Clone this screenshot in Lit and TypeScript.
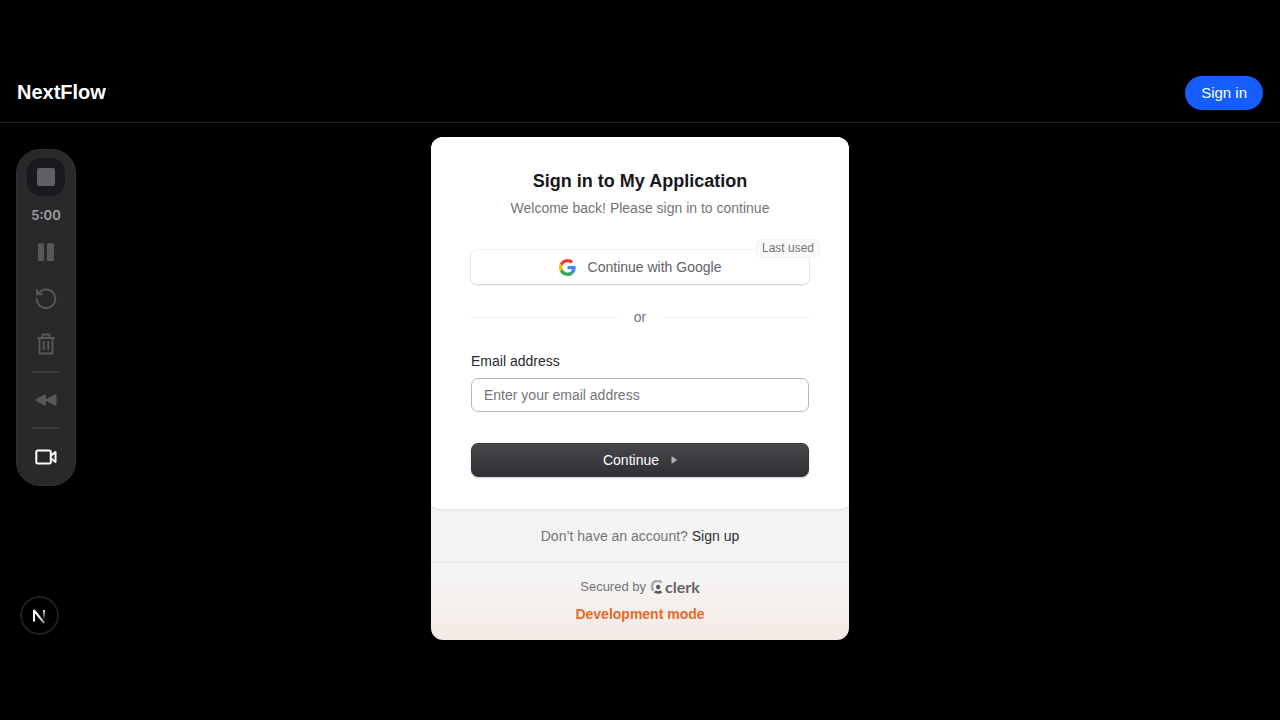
import { LitElement, html, css } from "lit";
import { customElement, state } from "lit/decorators.js";

@customElement("recorder-toolbar")
class RecorderToolbar extends LitElement {
  static styles = css`
    :host { display: block; }
    .bar {
      box-sizing: border-box; width: 60px; padding: 8px 0 13px;
      display: flex; flex-direction: column; align-items: center;
      border-radius: 24px; background: #29292c; border: 1px solid #2f2f32;
      font-family: "Inter", sans-serif;
    }
    button {
      width: 30px; height: 30px; padding: 0; border: 0; background: none;
      display: grid; place-items: center; color: #58585b;
    }
    svg { display: block; }
    .stop { width: 38px; height: 38px; border-radius: 14px; background: #1a1a1e; color: #605f62; }
    .time { margin: 9px 0 12px; font-size: 13px; line-height: 20px; font-weight: 600; color: #a0a0a3; }
    .tools { display: flex; flex-direction: column; gap: 16px; }
    .rule { width: 28px; height: 2px; margin: 12px 0; border: 0; background: #3b3b3e; }
    .rule:last-of-type { margin-bottom: 13px; }
    .camera { color: #fff; }
  `;
  render() {
    return html`
      <div class="bar" role="toolbar" aria-label="Recording">
        <button class="stop" aria-label="Stop"><svg width="20" height="20"><rect x="1" y="1" width="18" height="18" rx="2" fill="currentColor"/></svg></button>
        <span class="time">5:00</span>
        <div class="tools">
          <button aria-label="Pause"><svg width="22" height="22" fill="currentColor"><path d="M4 2.200h3.500q1.200 0 1.500 1.300V18.500q0 1.500-1.500 1.500H4q-1 0-1-1V3.200q0-1 1-1zM12 3.500q.3-1.300 1.500-1.300H17.500q1.500 0 1.500 1.500V19q0 1-1 1H13.500Q12 20 12 18.500z"/></svg></button>
          <button aria-label="Restart"><svg width="24" height="24" fill="none" stroke="currentColor" stroke-width="2"><path d="M4.200 7.700A9.300 9.300 0 1 1 2.700 12.500"/><path d="M3 3.200v5h5.500"/></svg></button>
          <button aria-label="Delete"><svg width="22" height="24" fill="none" stroke="currentColor" stroke-width="1.800"><path d="M2.500 6h17M7.500 5.500V2.500h7v3M4.500 6v15.500h13V6M8.700 9v9M13.300 9v9"/></svg></button>
        </div>
        <hr class="rule">
        <button aria-label="Rewind"><svg width="22" height="14" fill="currentColor" stroke="currentColor" stroke-width="2" stroke-linejoin="round"><path d="M10 2.500v9L1.500 7zM20.500 2.500v9L12 7z"/></svg></button>
        <hr class="rule">
        <button class="camera" aria-label="Camera"><svg width="24" height="20" fill="none" stroke="currentColor" stroke-width="2" stroke-linejoin="round"><rect x="2.300" y="3.500" width="14.500" height="13" rx="1.500"/><path d="M17 8.500 21.500 5v10L17 11.500"/></svg></button>
      </div>`;
  }
}

@customElement("sign-in-card")
class SignInCard extends LitElement {
  @state() private email = "";

  static styles = css`
    :host { display: block; }
    .card {
      border-radius: 12px; overflow: hidden; font-size: 14px; line-height: 20px; color: #747476;
      background: linear-gradient(#f4f4f5 0, #f4f4f4 87%, #f5eae5 100%);
    }
    .body {
      padding: 32px 40px; background: #fff; border-radius: 0 0 8px 8px;
      border-bottom: 1px solid #e6e6e7; box-shadow: 0 1px 2px #0000000d;
    }
    h1 { margin: 0; font-size: 18px; line-height: 24px; color: #17171c; text-align: center; }
    .sub { margin: 5px 0 32px; text-align: center; }
    .social { position: relative; }
    .google {
      width: 100%; height: 34px; display: flex; align-items: center; justify-content: center; gap: 12px;
      font: inherit; color: #626264; background: #fff; border: 0; border-radius: 6px; padding: 0;
      box-shadow: 0 0 0 1px #0000000b, 0 1px 2px #00000026;
    }
    .badge {
      position: absolute; top: -11px; right: -11px; padding: 0 5px; border-radius: 6px;
      background: #fafafa; border: 1px solid #f0f0f1; font-size: 12px; line-height: 17px;
    }
    .or { display: flex; align-items: center; gap: 16px; margin: 23px 0 24px; }
    .or::before, .or::after { content: ""; flex: 1; height: 1px; background: #ededee; }
    label { display: block; margin-bottom: 7px; color: #28282d; }
    input {
      box-sizing: border-box; width: 100%; height: 34px; padding: 0 12px; font: inherit; color: #28282d;
      border: 1px solid #b6b6b8; border-radius: 7px; background: #fff; outline: 0; display: block;
    }
    input::placeholder { color: #747476; opacity: 1; }
    .continue {
      width: 100%; height: 34px; margin-top: 31px; display: flex; align-items: center; justify-content: center; gap: 12px;
      font: inherit; color: #fff; border: 1px solid #37373b; border-radius: 7px; padding: 0;
      background: linear-gradient(#48484b, #2f2f35); box-shadow: 0 1px 2px #00000033;
    }
    .signup { margin: 0; padding: 16px 0; text-align: center; border-bottom: 1px solid #e6e6e7; }
    .signup a { color: #303034; text-decoration: none; }
    .secured { display: flex; align-items: center; justify-content: center; gap: 5px; padding-top: 14px; font-size: 13px; }
    .clerk { display: flex; align-items: center; gap: 1px; color: #646467; text-decoration: none; font: 700 16px/20px "Lato", sans-serif; }
    .dev { margin: 0; padding: 7px 0 16px; text-align: center; font-weight: 700; color: #e56b29; }
    svg { display: block; }
  `;

  private onInput(e: Event) {
    this.email = (e.target as HTMLInputElement).value;
  }

  render() {
    return html`
      <section class="card">
        <form class="body" @submit=${(e: Event) => e.preventDefault()}>
          <h1>Sign in to My Application</h1>
          <p class="sub">Welcome back! Please sign in to continue</p>
          <div class="social">
            <button class="google" type="button">
              <svg width="17" height="17" viewBox="0 0 48 48"><path fill="#ea4335" d="M24 9.500c3.540 0 6.710 1.220 9.210 3.600l6.850-6.850C35.900 2.380 30.470 0 24 0 14.620 0 6.510 5.380 2.560 13.220l7.980 6.190C12.430 13.720 17.740 9.500 24 9.500z"/><path fill="#4285f4" d="M46.980 24.550c0-1.570-.15-3.090-.38-4.550H24v9.020h12.940c-.58 2.960-2.260 5.480-4.780 7.180l7.730 6c4.510-4.180 7.090-10.360 7.090-17.650z"/><path fill="#fbbc05" d="M10.530 28.590c-.48-1.450-.76-2.990-.76-4.590s.27-3.140.76-4.590l-7.980-6.190C.92 16.460 0 20.120 0 24c0 3.880.92 7.540 2.560 10.780l7.970-6.190z"/><path fill="#34a853" d="M24 48c6.480 0 11.930-2.130 15.890-5.810l-7.730-6c-2.150 1.450-4.920 2.300-8.160 2.300-6.260 0-11.570-4.220-13.470-9.910l-7.980 6.190C6.510 42.620 14.620 48 24 48z"/></svg>
              <span>Continue with Google</span>
            </button>
            <span class="badge">Last used</span>
          </div>
          <div class="or">or</div>
          <label for="email">Email address</label>
          <input id="email" type="email" placeholder="Enter your email address" .value=${this.email} @input=${this.onInput}>
          <button class="continue" type="submit">Continue
            <svg width="6" height="8"><path d="M.5 1v6q0 .8.7.4L5.500 4.600q.6-.6 0-1.200L1.200.6Q.5.200.5 1z" fill="#b4b4b6"/></svg>
          </button>
        </form>
        <p class="signup">Don’t have an account? <a href="#sign-up">Sign up</a></p>
        <div class="secured">
          <span>Secured by</span>
          <a class="clerk" href="#clerk">
            <svg width="13" height="14" viewBox="0 0 13 14"><path d="M11.300 1.400 9.700 3.600A4.200 4.200 0 0 0 3.500 9.800L1.800 11.600A6.700 6.700 0 0 1 11.300 1.400z" fill="#aaaaac"/><circle cx="7.200" cy="7" r="2.200" fill="#58585b"/><path d="M3 12.400 4.800 10.600q2.400 1.200 4.800 0L11.400 12.400Q7.200 15.200 3 12.400z" fill="#58585b"/></svg>
            <span>clerk</span>
          </a>
        </div>
        <p class="dev">Development mode</p>
      </section>`;
  }
}

@customElement("app-root")
class AppRoot extends LitElement {
  static styles = css`
    :host {
      display: flex; flex-direction: column; min-height: 100vh; box-sizing: border-box; padding-top: 63px;
      background: #000; font-family: "Liberation Sans", Arial, sans-serif;
    }
    header {
      display: flex; align-items: center; justify-content: space-between;
      padding: 13px 17px 12px; border-bottom: 1px solid #222;
    }
    .brand { padding-bottom: 2px; font-size: 20px; line-height: 28px; font-weight: 700; color: #fff; }
    .signin {
      height: 34px; padding: 0 16px 1px; border: 0; border-radius: 17px;
      background: #155dfc; color: #fff; font: inherit; font-size: 15px;
    }
    main {
      flex: 1; display: grid; grid-template-columns: 1fr minmax(0, 418px) 1fr; padding: 14px 16px 80px;
    }
    .side {
      display: flex; flex-direction: column; justify-content: space-between; align-items: flex-start;
      padding: 12px 4px 5px 0;
    }
    .next {
      width: 39px; height: 39px; margin-left: 4px; padding: 0; border-radius: 20px;
      border: 2px solid #202020; background: #000; display: grid; place-items: center;
    }
    .next svg { display: block; }
  `;
  render() {
    return html`
      <header>
        <span class="brand">NextFlow</span>
        <button class="signin">Sign in</button>
      </header>
      <main>
        <div class="side">
          <recorder-toolbar></recorder-toolbar>
          <button class="next" aria-label="Next.js tools">
            <svg width="15" height="16" fill="none" stroke-width="2">
              <defs>
                <linearGradient id="stem" gradientUnits="userSpaceOnUse" x1="0" y1="1" x2="0" y2="12"><stop stop-color="#fff"/><stop offset="1" stop-color="#fff" stop-opacity="0"/></linearGradient>
                <linearGradient id="diag" gradientUnits="userSpaceOnUse" x1="7" y1="8" x2="13" y2="16"><stop stop-color="#fff"/><stop offset="1" stop-color="#fff" stop-opacity=".4"/></linearGradient>
              </defs>
              <path d="M2 13.500V2" stroke="#fff"/><path d="M1.700 2 12.200 15" stroke="url(#diag)"/><path d="M12 2v10" stroke="url(#stem)"/>
            </svg>
          </button>
        </div>
        <sign-in-card></sign-in-card>
      </main>`;
  }
}
